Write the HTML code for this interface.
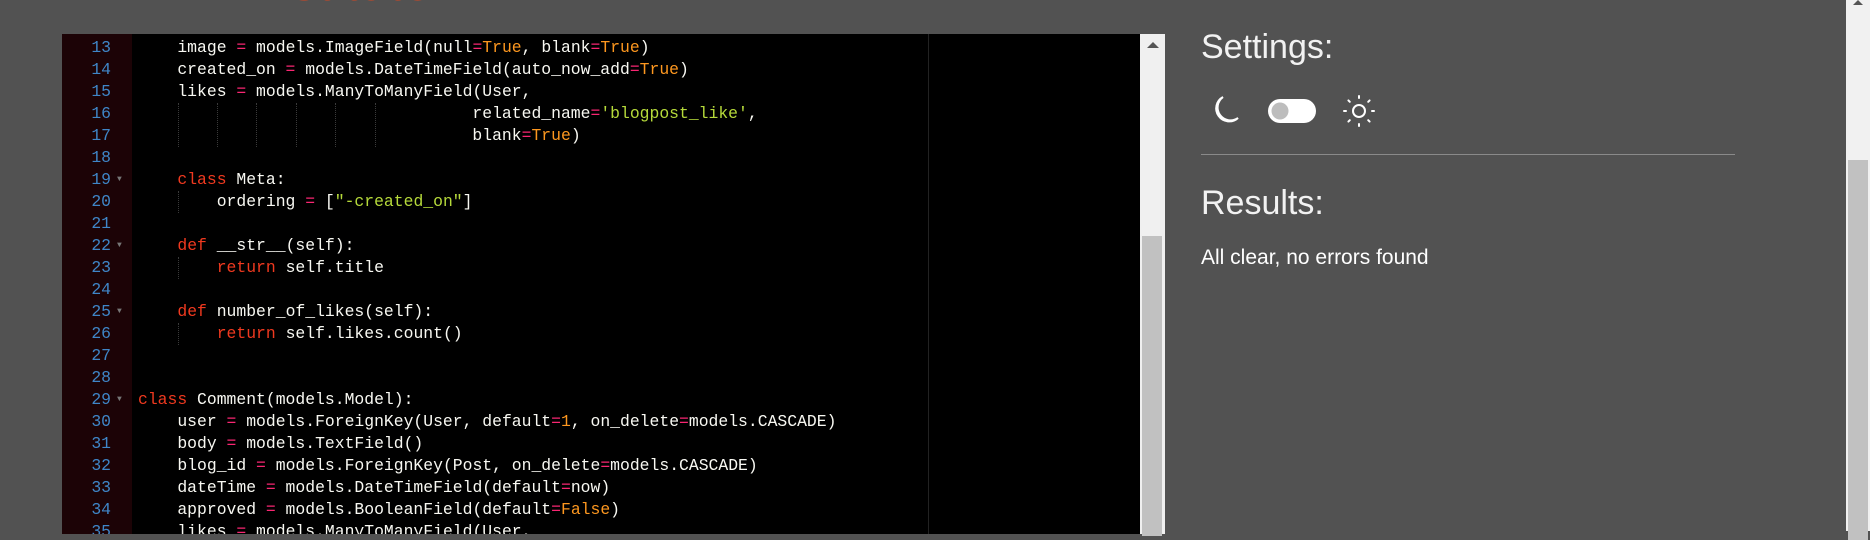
<!DOCTYPE html>
<html><head><meta charset="utf-8"><style>
html,body{margin:0;padding:0;}
body{width:1870px;height:531px;overflow:hidden;background:#525252;position:relative;font-family:"Liberation Sans",sans-serif;}
.title{position:absolute;left:248px;top:-37px;font-size:50px;color:#e2441b;line-height:40px;letter-spacing:1px;}
.editor{position:absolute;left:62px;top:34px;width:1078px;height:500px;background:#000;overflow:hidden;}
.gutter{position:absolute;left:0;top:0;width:70px;height:100%;background:#1c0306;}
.line{position:absolute;left:0;height:22px;line-height:22px;font-family:"Liberation Mono",monospace;font-size:16.4px;white-space:pre;color:#f8f8f2;}
.ln{position:absolute;width:49px;text-align:right;color:#3f86c8;}
.fold{position:absolute;left:55px;color:#777;font-size:8px;}
.code{position:absolute;left:76px;}
.k{color:#f0391f}.o{color:#f92672}.t{color:#fd971f}.s{color:#b5d93a}
.guide{position:absolute;width:0;border-left:1px dotted #3a3a3a;}
.margin{position:absolute;left:866px;top:0;width:1px;height:100%;background:#222;}
.sb{position:absolute;left:1140px;top:34px;width:25px;height:500px;background:#f0f0f0;}
.sb .thumb{position:absolute;left:2px;top:202px;width:20px;height:300px;background:#c1c1c1;}
.sb .arr{position:absolute;left:7px;top:8px;width:0;height:0;border-left:6px solid transparent;border-right:6px solid transparent;border-bottom:6px solid #555;}
.psb{position:absolute;left:1846px;top:0;width:24px;height:531px;background:#f1f1f1;}
.psb .thumb{position:absolute;left:2px;top:160px;width:20px;height:380px;background:#c1c1c1;}
.psb .arr{position:absolute;left:7px;top:0px;width:0;height:0;border-left:5px solid transparent;border-right:5px solid transparent;border-bottom:5px solid #555;}
.h{position:absolute;left:1201px;color:#f2f2f2;font-size:34px;font-weight:300;}
.hr{position:absolute;left:1201px;top:154px;width:534px;height:1px;background:#8a8a8a;}
.msg{position:absolute;left:1201px;top:246px;color:#fff;font-size:21px;}
</style></head><body>
<div class="title">Institute</div>
<div class="editor">
<div class="gutter"></div>
<div class="margin"></div>
<div class="line" style="top:3px"><span class="ln">13</span><span class="code">    image <span class="o">=</span> models.ImageField(null<span class="o">=</span><span class="t">True</span>, blank<span class="o">=</span><span class="t">True</span>)</span></div>
<div class="line" style="top:25px"><span class="ln">14</span><span class="code">    created_on <span class="o">=</span> models.DateTimeField(auto_now_add<span class="o">=</span><span class="t">True</span>)</span></div>
<div class="line" style="top:47px"><span class="ln">15</span><span class="code">    likes <span class="o">=</span> models.ManyToManyField(User,</span></div>
<div class="line" style="top:69px"><span class="ln">16</span><span class="code">                                  related_name<span class="o">=</span><span class="s">'blogpost_like'</span>,</span></div>
<div class="line" style="top:91px"><span class="ln">17</span><span class="code">                                  blank<span class="o">=</span><span class="t">True</span>)</span></div>
<div class="line" style="top:113px"><span class="ln">18</span></div>
<div class="line" style="top:135px"><span class="ln">19</span><span class="fold">▼</span><span class="code">    <span class="k">class</span> Meta:</span></div>
<div class="line" style="top:157px"><span class="ln">20</span><span class="code">        ordering <span class="o">=</span> [<span class="s">"-created_on"</span>]</span></div>
<div class="line" style="top:179px"><span class="ln">21</span></div>
<div class="line" style="top:201px"><span class="ln">22</span><span class="fold">▼</span><span class="code">    <span class="k">def</span> __str__(self):</span></div>
<div class="line" style="top:223px"><span class="ln">23</span><span class="code">        <span class="k">return</span> self.title</span></div>
<div class="line" style="top:245px"><span class="ln">24</span></div>
<div class="line" style="top:267px"><span class="ln">25</span><span class="fold">▼</span><span class="code">    <span class="k">def</span> number_of_likes(self):</span></div>
<div class="line" style="top:289px"><span class="ln">26</span><span class="code">        <span class="k">return</span> self.likes.count()</span></div>
<div class="line" style="top:311px"><span class="ln">27</span></div>
<div class="line" style="top:333px"><span class="ln">28</span></div>
<div class="line" style="top:355px"><span class="ln">29</span><span class="fold">▼</span><span class="code"><span class="k">class</span> Comment(models.Model):</span></div>
<div class="line" style="top:377px"><span class="ln">30</span><span class="code">    user <span class="o">=</span> models.ForeignKey(User, default<span class="o">=</span><span class="t">1</span>, on_delete<span class="o">=</span>models.CASCADE)</span></div>
<div class="line" style="top:399px"><span class="ln">31</span><span class="code">    body <span class="o">=</span> models.TextField()</span></div>
<div class="line" style="top:421px"><span class="ln">32</span><span class="code">    blog_id <span class="o">=</span> models.ForeignKey(Post, on_delete<span class="o">=</span>models.CASCADE)</span></div>
<div class="line" style="top:443px"><span class="ln">33</span><span class="code">    dateTime <span class="o">=</span> models.DateTimeField(default<span class="o">=</span>now)</span></div>
<div class="line" style="top:465px"><span class="ln">34</span><span class="code">    approved <span class="o">=</span> models.BooleanField(default<span class="o">=</span><span class="t">False</span>)</span></div>
<div class="line" style="top:487px"><span class="ln">35</span><span class="code">    likes <span class="o">=</span> models.ManyToManyField(User,</span></div>
<div class="guide" style="left:116px;top:69px;height:44px"></div>
<div class="guide" style="left:155px;top:69px;height:44px"></div>
<div class="guide" style="left:194px;top:69px;height:44px"></div>
<div class="guide" style="left:234px;top:69px;height:44px"></div>
<div class="guide" style="left:273px;top:69px;height:44px"></div>
<div class="guide" style="left:313px;top:69px;height:44px"></div>
<div class="guide" style="left:116px;top:157px;height:22px"></div>
<div class="guide" style="left:116px;top:223px;height:22px"></div>
<div class="guide" style="left:116px;top:289px;height:22px"></div>
</div>
<div class="sb"><div class="arr"></div><div class="thumb"></div></div>
<div class="h" style="top:28px">Settings:</div>
<svg style="position:absolute;left:1206px;top:94px" width="170" height="36" viewBox="0 0 170 36">
<path d="M17 3 A13 13 0 1 0 32 24 A11 11 0 0 1 17 3 Z" fill="none" stroke="#fff" stroke-width="2"/>
<rect x="62" y="5" width="48" height="24" rx="12" fill="#fff"/>
<circle cx="74" cy="17" r="8.5" fill="#bdbdbd"/>
<circle cx="153" cy="17" r="6" fill="none" stroke="#fff" stroke-width="2"/>
<g stroke="#fff" stroke-width="2" stroke-linecap="round">
<line x1="153" y1="2" x2="153" y2="4"/><line x1="153" y1="30" x2="153" y2="32"/>
<line x1="138" y1="17" x2="140" y2="17"/><line x1="166" y1="17" x2="168" y2="17"/>
<line x1="142.4" y1="6.4" x2="143.8" y2="7.8"/><line x1="162.2" y1="26.2" x2="163.6" y2="27.6"/>
<line x1="142.4" y1="27.6" x2="143.8" y2="26.2"/><line x1="162.2" y1="7.8" x2="163.6" y2="6.4"/>
</g></svg>
<div class="hr"></div>
<div class="h" style="top:184px">Results:</div>
<div class="msg">All clear, no errors found</div>
<div class="psb"><div class="arr"></div><div class="thumb"></div></div>
</body></html>
